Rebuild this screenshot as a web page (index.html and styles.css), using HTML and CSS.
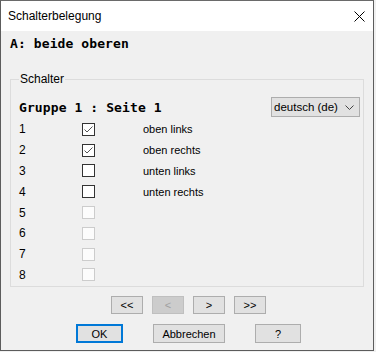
FILE: index.html
```html
<!DOCTYPE html>
<html>

<head>
    <title>Schalterbelegung</title>
    <link rel="stylesheet" href="styles.css">
</head>

<body>
    <div class="window">
        <div class="titlebar">
            <span class="title">Schalterbelegung</span>
            <svg class="close" width="11" height="11" viewBox="0 0 11 11">
                <path d="M0.5 0.5 L10.5 10.5 M10.5 0.5 L0.5 10.5" stroke="#000" stroke-width="1" fill="none" />
            </svg>
        </div>

        <div class="content">
            <div class="mapping">A: beide oberen</div>

            <fieldset class="group">
                <legend>Schalter</legend>

                <div class="group-head">
                    <span class="mono">Gruppe 1 : Seite 1</span>
                    <div class="select">
                        <span>deutsch (de)</span>
                        <svg width="9" height="5" viewBox="0 0 9 5">
                            <path d="M0.5 0.5 L4.5 4.5 L8.5 0.5" stroke="#444" fill="none" />
                        </svg>
                    </div>
                </div>

                <div class="rows">
                    <div class="row">
                        <span class="num">1</span>
                        <span class="box">
                            <svg width="11" height="11" viewBox="0 0 11 11">
                                <path d="M1.5 5.5 L4 8 L9.5 2.5" stroke="#555" fill="none" />
                            </svg>
                        </span>
                        <span class="label">oben links</span>
                    </div>
                    <div class="row">
                        <span class="num">2</span>
                        <span class="box">
                            <svg width="11" height="11" viewBox="0 0 11 11">
                                <path d="M1.5 5.5 L4 8 L9.5 2.5" stroke="#555" fill="none" />
                            </svg>
                        </span>
                        <span class="label">oben rechts</span>
                    </div>
                    <div class="row">
                        <span class="num">3</span>
                        <span class="box"></span>
                        <span class="label">unten links</span>
                    </div>
                    <div class="row">
                        <span class="num">4</span>
                        <span class="box"></span>
                        <span class="label">unten rechts</span>
                    </div>
                    <div class="row">
                        <span class="num">5</span>
                        <span class="box disabled"></span>
                    </div>
                    <div class="row">
                        <span class="num">6</span>
                        <span class="box disabled"></span>
                    </div>
                    <div class="row">
                        <span class="num">7</span>
                        <span class="box disabled"></span>
                    </div>
                    <div class="row">
                        <span class="num">8</span>
                        <span class="box disabled"></span>
                    </div>
                </div>
            </fieldset>

            <div class="nav">
                <button>&lt;&lt;</button>
                <button disabled>&lt;</button>
                <button>&gt;</button>
                <button>&gt;&gt;</button>
            </div>

            <div class="actions">
                <button class="ok">OK</button>
                <button class="cancel">Abbrechen</button>
                <button class="help">?</button>
            </div>
        </div>
    </div>
</body>

</html>
```

FILE: styles.css
```css
body {
    margin: 0;
    background-color: #f0f0f0;
    font-family: "Liberation Sans", Arial, sans-serif;
}

.window {
    width: 372px;
    height: 349px;
    border: 1px solid #5c5c5c;
    border-top-color: #6a6a6a;
    background-color: #f0f0f0;
    display: flex;
    flex-direction: column;
}

.titlebar {
    height: 30px;
    background-color: #fff;
    display: flex;
    align-items: center;
    padding-left: 7px;
    padding-right: 8px;
}

.title {
    flex-grow: 1;
    font-size: 12px;
    color: #000;
}

.close {
    display: block;
}

.content {
    padding: 5px 9px 0 9px;
}

.mapping,
.mono {
    font-family: "DejaVu Sans Mono", monospace;
    font-weight: bold;
    font-size: 13px;
    letter-spacing: 0.1px;
    color: #000;
}

.mapping {
    line-height: 15px;
    margin-bottom: 21px;
}

.group {
    margin: 0;
    width: 354px;
    box-sizing: border-box;
    border: 1px solid #dcdcdc;
    padding: 11px 0 1px 8px;
}

.group legend {
    font-size: 12px;
    line-height: 14px;
    padding: 0 1px;
    margin-left: 0;
    color: #000;
}

.group-head {
    height: 20px;
    display: flex;
    align-items: center;
    justify-content: space-between;
    padding-right: 3px;
}

.select {
    width: 80px;
    height: 18px;
    border: 1px solid #adadad;
    background-color: #e1e1e1;
    display: flex;
    align-items: center;
    justify-content: space-between;
    padding: 0 5px 0 2px;
    font-size: 11.5px;
}

.rows {
    margin-top: 2px;
}

.row {
    height: 20.8px;
    display: flex;
    align-items: center;
    font-size: 12px;
}

.num {
    width: 63px;
}

.box {
    width: 11px;
    height: 11px;
    border: 1px solid #333;
    background-color: #fff;
    display: flex;
    align-items: center;
    justify-content: center;
    margin-right: 48px;
}

.box.disabled {
    border-color: #cccccc;
    background-color: #fcfcfc;
}

.label {
    font-size: 11px;
}

button {
    font-family: "Liberation Sans", Arial, sans-serif;
    font-size: 11px;
    height: 18px;
    padding: 0;
    margin: 0;
    background-color: #e1e1e1;
    border: 1px solid #adadad;
    border-radius: 0;
    color: #000;
}

button:disabled {
    background-color: #cccccc;
    border-color: #bfbfbf;
    color: #a0a0a0;
}

.nav {
    display: flex;
    gap: 9px;
    margin-top: 9px;
    padding-left: 101px;
}

.nav button {
    width: 32px;
}

.actions {
    display: flex;
    gap: 30px;
    margin-top: 10px;
    padding-left: 66px;
}

.ok {
    width: 47px;
    height: 19px;
    border: 2px solid #0078d7;
}

.cancel {
    width: 72px;
    height: 19px;
}

.help {
    width: 46px;
    height: 19px;
}
```
